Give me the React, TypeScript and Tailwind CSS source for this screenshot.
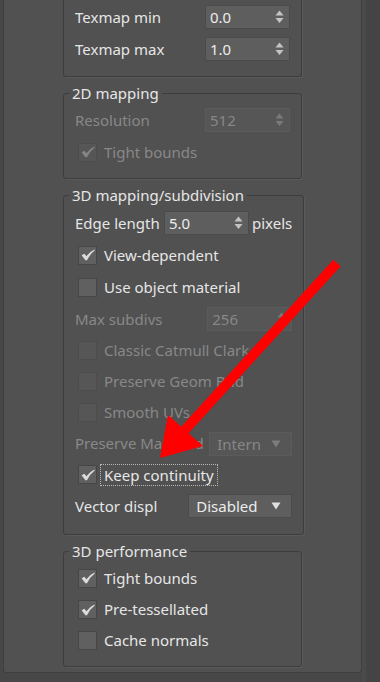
import React from "react";

const EN = "text-[#e6e6e6]";
const DIS = "text-[#888888]";

function Arrows({ disabled }: { disabled?: boolean }) {
  const c = disabled ? "#7a7a7a" : "#c4c4c4";
  return (
    <svg width="9" height="14" viewBox="0 0 9 14" className="shrink-0">
      <path d="M4.5 0.5 L8.5 5.5 L0.5 5.5 Z" fill={c} />
      <path d="M0.5 8 L8.5 8 L4.5 13 Z" fill={c} />
    </svg>
  );
}

function Spinner({ value, disabled, w = "w-[85px]" }: { value: string; disabled?: boolean; w?: string }) {
  return (
    <div
      className={`${w} h-[24px] flex items-center justify-between pl-[4px] pr-[5px] border ${
        disabled ? "bg-[#565656] border-[#5b5b5b] text-[#878787]" : "bg-[#5e5e5e] border-[#4b4b4b] text-[#ececec]"
      }`}
    >
      <span className="leading-[20px]">{value}</span>
      <Arrows disabled={disabled} />
    </div>
  );
}

function Dropdown({
  value,
  disabled,
  w,
  textW = "",
}: {
  value: string;
  disabled?: boolean;
  w: string;
  textW?: string;
}) {
  return (
    <div
      className={`${w} h-[24px] flex items-center justify-between pl-[7px] pr-[10px] border ${
        disabled ? "bg-[#565656] border-[#5b5b5b] text-[#878787]" : "bg-[#5e5e5e] border-[#4b4b4b] text-[#ececec]"
      }`}
    >
      <span className={`${textW} leading-[20px] whitespace-nowrap overflow-hidden`}>{value}</span>
      <svg width="10" height="8" viewBox="0 0 10 8" className="shrink-0 ml-[4px]">
        <path d="M0.5 0.5 L9.5 0.5 L5 7.5 Z" fill={disabled ? "#7d7d7d" : "#e0e0e0"} />
      </svg>
    </div>
  );
}

function Check({ checked, disabled }: { checked?: boolean; disabled?: boolean }) {
  return (
    <div
      className={`w-[19px] h-[19px] ml-[3px] shrink-0 flex items-center justify-center border ${
        disabled ? "bg-[#565656] border-[#4c4c4c]" : "bg-[#606060] border-[#464646]"
      }`}
    >
      {checked && (
        <svg width="14" height="12" viewBox="0 0 14 12">
          <path
            d="M0.6 6.2 L3.4 4.8 L5.4 7.2 Q8.4 2.8 13.4 0.4 L13.7 1.6 Q9.4 4.8 6 11.2 L4.4 11.2 Z"
            fill={disabled ? "#858585" : "#dcdcdc"}
          />
        </svg>
      )}
    </div>
  );
}

function CheckRow({
  label,
  checked,
  disabled,
  h = "h-[31px]",
  focus,
}: {
  label: string;
  checked?: boolean;
  disabled?: boolean;
  h?: string;
  focus?: boolean;
}) {
  return (
    <div className={`${h} flex items-center`}>
      <Check checked={checked} disabled={disabled} />
      {focus ? (
        <span className={`ml-[3px] px-[3px] h-[22px] leading-[20px] border border-dotted border-[#b8b8b8] ${EN}`}>
          {label}
        </span>
      ) : (
        <span className={`ml-[7px] ${disabled ? DIS : EN}`}>{label}</span>
      )}
    </div>
  );
}

function SpinRow({ label, value, disabled, h = "h-[32px]" }: { label: string; value: string; disabled?: boolean; h?: string }) {
  return (
    <div className={`${h} flex items-center justify-between`}>
      <span className={disabled ? DIS : EN}>{label}</span>
      <Spinner value={value} disabled={disabled} />
    </div>
  );
}

function Group({ title, children, className = "" }: { title: string; children: React.ReactNode; className?: string }) {
  return (
    <fieldset className={`border border-[#3d3d3d] rounded-[3px] shadow-[1px_1px_0_#5a5a5a] pl-[11px] pr-[11px] ${className}`}>
      <legend className="-ml-[6px] px-[3px] text-[15px] leading-[20px] text-[#e6e6e6]">{title}</legend>
      {children}
    </fieldset>
  );
}

export default function App() {
  return (
    <div className="relative w-[380px] h-[682px] overflow-hidden bg-[#474747] flex font-['Noto_Sans',sans-serif] text-[15px]">
      <div className="w-[3px] shrink-0" />
      <div className="w-[359px] h-[673px] shrink-0 bg-[#515151] border-l border-b border-r border-[#3f3f3f] rounded-b-[3px] pl-[59px] pr-[59px] pb-[5px] flex flex-col">
        {/* group 1 (top cut off) */}
        <div className="border-x border-b border-[#3d3d3d] rounded-b-[3px] shadow-[1px_1px_0_#5a5a5a] pl-[11px] pr-[11px] pt-[1px] pb-[11px]">
          <SpinRow label="Texmap min" value="0.0" />
          <SpinRow label="Texmap max" value="1.0" />
        </div>

        <Group title="2D mapping" className="mt-[6px] pt-[1px] pb-[10px]">
          <SpinRow label="Resolution" value="512" disabled />
          <CheckRow label="Tight bounds" checked disabled h="h-[32px]" />
        </Group>

        <Group title="3D mapping/subdivision" className="mt-[6px] pt-[2px] pb-[12px]">
          <div className="h-[32px] flex items-center">
            <span className={`w-[89px] shrink-0 ${EN}`}>Edge length</span>
            <Spinner value="5.0" />
            <span className={`ml-[3px] ${EN}`}>pixels</span>
          </div>
          <CheckRow label="View-dependent" checked h="h-[32px]" />
          <CheckRow label="Use object material" h="h-[32px]" />
          <SpinRow label="Max subdivs" value="256" disabled />
          <CheckRow label="Classic Catmull Clark" disabled />
          <CheckRow label="Preserve Geom Bnd" disabled />
          <CheckRow label="Smooth UVs" disabled />
          <div className="h-[31px] flex items-center justify-between">
            <span className={`whitespace-nowrap ${DIS}`}>Preserve Map Bnd</span>
            <Dropdown value="Internal" disabled w="w-[83px]" textW="w-[43px]" />
          </div>
          <CheckRow label="Keep continuity" checked focus />
          <div className="h-[32px] flex items-center justify-between">
            <span className={EN}>Vector displ</span>
            <Dropdown value="Disabled" w="w-[104px]" />
          </div>
        </Group>

        <Group title="3D performance" className="mt-[6px] pt-[1px] pb-[10px]">
          <CheckRow label="Tight bounds" checked h="h-[32px]" />
          <CheckRow label="Pre-tessellated" checked />
          <CheckRow label="Cache normals" />
        </Group>
      </div>
      <div className="w-[4px] shrink-0 bg-[#4a4a4a]" />
      <div className="flex-1 bg-[#444444]" />

      <svg className="absolute inset-0 pointer-events-none" width="380" height="682" viewBox="0 0 380 682">
        <line x1="337" y1="263" x2="184" y2="431" stroke="#ff0000" strokeWidth="10" />
        <polygon points="160,458 168,415 203,446" fill="#ff0000" />
      </svg>
    </div>
  );
}
